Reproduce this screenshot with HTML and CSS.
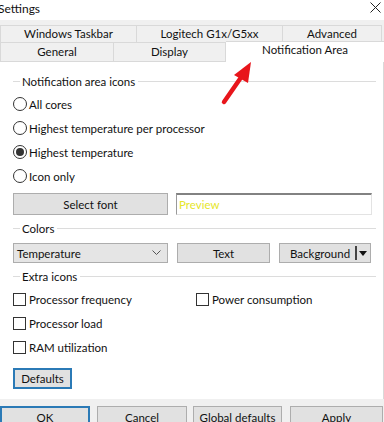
FILE: index.html
```html
<!DOCTYPE html>
<html lang="en">

<head>
  <meta charset="utf-8">
  <title>Settings</title>
  <link rel="stylesheet" href="styles.css">
</head>

<body>

  <div class="titlebar">
    <span class="title">Settings</span>
    <svg class="close" width="11" height="11" viewBox="0 0 11 11">
      <path d="M0.5 0.5 L10.5 10.5 M10.5 0.5 L0.5 10.5" stroke="#222" stroke-width="1" fill="none" />
    </svg>
  </div>

  <div class="tabs">
    <div class="tab-row">
      <div class="tab w-taskbar">Windows Taskbar</div>
      <div class="tab w-logitech">Logitech G1x/G5xx</div>
      <div class="tab w-advanced">Advanced</div>
    </div>
    <div class="tab-row front">
      <div class="tab w-general">General</div>
      <div class="tab w-display">Display</div>
      <div class="tab selected">Notification Area</div>
    </div>
  </div>

  <div class="panel">
    <!-- Notification area icons -->
    <div class="group first">
      <span class="group-lead"></span>
      <span class="group-label">Notification area icons</span>
      <span class="group-line"></span>
    </div>
    <label class="option"><span class="radio"></span>All cores</label>
    <label class="option"><span class="radio"></span>Highest temperature per processor</label>
    <label class="option"><span class="radio checked"></span>Highest temperature</label>
    <label class="option"><span class="radio"></span>Icon only</label>

    <div class="font-row">
      <button class="btn btn-font">Select font</button>
      <div class="preview">Preview</div>
    </div>

    <!-- Colors -->
    <div class="group">
      <span class="group-lead"></span>
      <span class="group-label">Colors</span>
      <span class="group-line"></span>
    </div>
    <div class="color-row">
      <div class="combo">
        <span>Temperature</span>
        <svg width="9" height="6" viewBox="0 0 9 6">
          <path d="M0.5 0.5 L4.5 4.5 L8.5 0.5" stroke="#555" stroke-width="1" fill="none" />
        </svg>
      </div>
      <button class="btn btn-text">Text</button>
      <div class="btn split">
        <span class="split-label">Background</span>
        <span class="split-bar"></span>
        <svg width="8" height="5" viewBox="0 0 8 5">
          <path d="M0 0 L8 0 L4 5 Z" fill="#111" />
        </svg>
      </div>
    </div>

    <!-- Extra icons -->
    <div class="group">
      <span class="group-lead"></span>
      <span class="group-label">Extra icons</span>
      <span class="group-line"></span>
    </div>
    <div class="check-row">
      <label class="option col"><span class="check"></span>Processor frequency</label>
      <label class="option"><span class="check"></span>Power consumption</label>
    </div>
    <label class="option"><span class="check"></span>Processor load</label>
    <label class="option"><span class="check"></span>RAM utilization</label>

    <button class="btn btn-defaults focused">Defaults</button>
  </div>

  <div class="footer">
    <button class="btn w-ok focused">OK</button>
    <button class="btn w-cancel">Cancel</button>
    <button class="btn w-global">Global defaults</button>
    <button class="btn w-apply">Apply</button>
  </div>

  <!-- red pointer drawn over the dialog -->
  <svg class="pointer" width="40" height="50" viewBox="0 0 40 50">
    <path d="M4 44 L22 18" stroke="#e8151b" stroke-width="4.5" stroke-linecap="round" fill="none" />
    <path d="M31 4 L14 17 L28 25 Z" fill="#e8151b" />
  </svg>

</body>

</html>
```

FILE: styles.css
```css
body {
  margin: 0;
  width: 384px;
  height: 422px;
  overflow: hidden;
  position: relative;
  font-family: Lato, "Noto Sans", sans-serif;
  font-size: 11.5px;
  color: #111;
  background-color: #f0f0f0;
}

button {
  font-family: inherit;
  font-size: inherit;
  color: #111;
  padding: 0;
}

.titlebar {
  display: flex;
  align-items: center;
  justify-content: space-between;
  height: 20px;
  padding-right: 3px;
  background-color: #fff;
  font-size: 12px;
}

.title {
  margin-left: -2px;
  margin-top: -4px;
}

.close {
  margin-top: -5px;
}

.tabs {
  padding-top: 5px;
}

.tab-row {
  display: flex;
  height: 18px;
}

.tab-row.front {
  height: 19px;
  align-items: flex-end;
}

.tab {
  box-sizing: border-box;
  height: 100%;
  display: flex;
  align-items: center;
  justify-content: center;
  background-color: #f0f0f0;
  border: 1px solid #d9d9d9;
  border-left: none;
  line-height: 1;
}

.w-taskbar { width: 137px; border-left: 1px solid #d9d9d9; }
.w-logitech { width: 146px; }
.w-advanced { width: 99px; }
.w-general { width: 114px; border-top: none; border-left: 1px solid #d9d9d9; }
.w-display { width: 112px; border-top: none; }

.tab.selected {
  flex: 1;
  height: 21px;
  margin-top: -2px;
  align-items: flex-start;
  padding-top: 2px;
  background-color: #fff;
  border: none;
  border-top: 1px solid #d9d9d9;
}

.panel {
  box-sizing: border-box;
  height: 337px;
  padding: 0 7px 0 13px;
  background-color: #fff;
  border-right: 1px solid #d9d9d9;
}

.group {
  display: flex;
  align-items: center;
  height: 16px;
  margin-top: 5px;
}

.group.first {
  margin-top: 0;
  padding-top: 11px;
}

.group-lead {
  width: 7px;
  border-top: 1px solid #dcdcdc;
}

.group-label {
  padding: 0 3px 0 2px;
}

.group-line {
  flex: 1;
  border-top: 1px solid #dcdcdc;
}

.option {
  display: flex;
  align-items: center;
  height: 24px;
}

.group + .option,
.group + .check-row {
  margin-top: 3px;
}

.radio {
  box-sizing: border-box;
  width: 14px;
  height: 14px;
  margin-right: 2px;
  border: 1px solid #333;
  border-radius: 50%;
  display: flex;
  align-items: center;
  justify-content: center;
}

.radio.checked::after {
  content: "";
  width: 8px;
  height: 8px;
  border-radius: 50%;
  background-color: #333;
}

.check {
  box-sizing: border-box;
  width: 13px;
  height: 13px;
  margin-right: 3px;
  border: 1px solid #333;
}

.btn {
  box-sizing: border-box;
  background-color: #e1e1e1;
  border: 1px solid #adadad;
  display: flex;
  align-items: center;
  justify-content: center;
}

.font-row {
  display: flex;
  height: 22px;
  margin-top: 5px;
}

.btn-font {
  width: 155px;
  height: 22px;
}

.preview {
  box-sizing: border-box;
  width: 196px;
  height: 22px;
  margin-left: 8px;
  padding-left: 2px;
  display: flex;
  align-items: center;
  color: #e6e62a;
  border: 1px solid #e3e3e3;
  border-top: 2px solid #828282;
  border-left: 1px solid #9a9a9a;
}

.color-row {
  display: flex;
  height: 20px;
  margin-top: 7px;
}

.combo {
  box-sizing: border-box;
  width: 155px;
  padding: 0 6px 0 3px;
  display: flex;
  align-items: center;
  justify-content: space-between;
  background-color: #e5e5e5;
  border: 1px solid #adadad;
}

.btn-text {
  width: 93px;
  margin-left: 9px;
}

.split {
  width: 92px;
  margin-left: 9px;
  justify-content: flex-start;
  padding-left: 10px;
}

.split-label {
  flex: 1;
  white-space: nowrap;
}

.split-bar {
  width: 2px;
  height: 14px;
  margin-right: 2px;
  background-color: #444;
}

.split svg {
  margin-right: 3px;
}

.check-row {
  display: flex;
}

.option.col {
  width: 183px;
}

.btn-defaults {
  width: 59px;
  height: 21px;
  margin-top: 9px;
}

.focused {
  border: 2px solid #2b7ab6;
}

.footer {
  display: flex;
  padding-top: 7px;
}

.footer .btn {
  height: 23px;
}

.w-ok { width: 90px; }
.w-cancel { width: 90px; margin-left: 7px; }
.w-global { width: 89px; margin-left: 6px; }
.w-apply { width: 93px; margin-left: 8px; }

.pointer {
  position: absolute;
  left: 220px;
  top: 58px;
}
```
